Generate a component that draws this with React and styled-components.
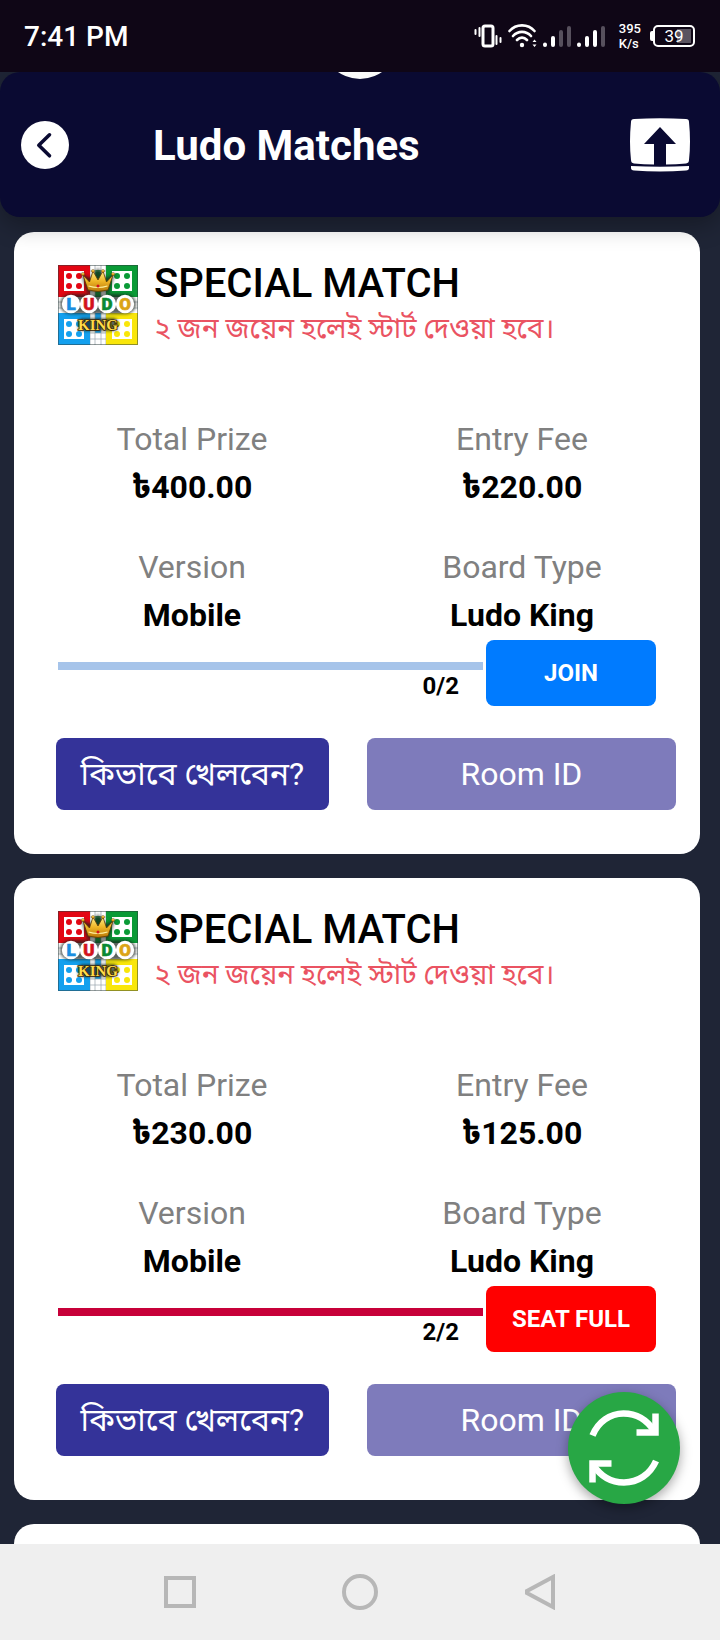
import React from "react";
import styled, { createGlobalStyle } from "styled-components";

const GlobalStyle = createGlobalStyle`
  * {
    box-sizing: border-box;
  }
  body {
    margin: 0;
    background: #1f2536;
    font-family: Roboto, "Noto Sans Bengali", "Noto Sans", sans-serif;
  }
  button {
    font-family: inherit;
    border: none;
    padding: 0;
    cursor: pointer;
  }
`;

const Screen = styled.div`
  height: 100vh;
  display: flex;
  flex-direction: column;
  background: #1f2536;
`;

const StatusBar = styled.div`
  flex: none;
  height: 72px;
  padding: 0 25px 0 24px;
  display: flex;
  align-items: center;
  justify-content: space-between;
  background: #0f0616;
  color: #fff;
`;

const Clock = styled.span`
  padding-top: 2px;
  font-size: 28px;
  font-weight: 500;
  line-height: 32px;
`;

const StatusIcons = styled.div`
  display: flex;
  align-items: center;
  gap: 6px;
`;

const Speed = styled.div`
  padding: 0 3px 0 8px;
  font-size: 13px;
  font-weight: 500;
  line-height: 15px;
`;

const Battery = styled.div`
  display: flex;
  align-items: center;
`;

const BatteryTip = styled.span`
  width: 3px;
  height: 10px;
  border-radius: 2px 0 0 2px;
  background: #fff;
`;

const BatteryBody = styled.span`
  width: 42px;
  height: 22px;
  border: 2px solid #fff;
  border-radius: 5px;
  padding: 2px;
  display: flex;
`;

const BatteryLevel = styled.span`
  flex: 1;
  font-size: 17px;
  line-height: 14px;
  text-align: center;
  background: linear-gradient(to right, transparent 60%, #5a5360 60%);
`;

const Content = styled.div`
  flex: 1;
  min-height: 0;
  position: relative;
  overflow: hidden;
`;

const Header = styled.header`
  position: relative;
  z-index: 1;
  height: 145px;
  padding: 0 30px 0 21px;
  display: flex;
  align-items: center;
  background: #0a0a32;
  border-radius: 20px;
  box-shadow: 0 8px 24px rgba(0, 0, 0, 0.3);
`;

const Spinner = styled.span`
  position: absolute;
  top: -69px;
  left: 50%;
  width: 76px;
  height: 76px;
  margin-left: -38px;
  border-radius: 50%;
  background: #fafafa;
`;

const IconButton = styled.button`
  display: flex;
  align-items: center;
  justify-content: center;
  background: none;
`;

const BackButton = styled(IconButton)`
  width: 48px;
  height: 48px;
  border-radius: 50%;
  background: #fff;
`;

const Title = styled.h1`
  flex: 1;
  margin: 0;
  padding: 2px 0 0 84px;
  color: #fff;
  font-size: 42px;
  font-weight: 700;
  line-height: 48px;
`;

const List = styled.main`
  padding: 15px 20px 0 14px;
  display: flex;
  flex-direction: column;
  gap: 24px;
`;

const Card = styled.section`
  min-height: 622px;
  border-radius: 20px;
  background: #fff;
`;

const CardTop = styled.div`
  padding: 33px 44px 0;
  display: flex;
  gap: 16px;
`;

const Name = styled.h2`
  margin: 0;
  color: #000;
  font-size: 40px;
  font-weight: 500;
  line-height: 38px;
`;

const Note = styled.p`
  margin: 0;
  color: #ea5362;
  font-size: 28px;
  line-height: 52px;
  white-space: nowrap;
`;

const Stats = styled.dl`
  margin: 0;
  padding: 60px 13px 1px;
  display: grid;
  grid-template-columns: 1fr 1fr;
  row-gap: 32px;
  text-align: center;
  font-size: 32px;
  line-height: 48px;
`;

const Label = styled.dt`
  color: #808080;
`;

const Value = styled.dd`
  margin: 0;
  color: #000;
  font-weight: 700;
`;

const SeatRow = styled.div`
  padding: 0 44px;
  display: flex;
  gap: 3px;
`;

const Seats = styled.div`
  flex: 1;
  padding-top: 22px;
`;

const Progress = styled.div`
  height: 8px;
  background: ${(props) => (props.$full ? "#c70039" : "#a6c4ea")};
`;

const Count = styled.div`
  padding: 2px 24px 0 0;
  color: #000;
  font-size: 24px;
  font-weight: 700;
  line-height: 28px;
  text-align: right;
`;

const JoinButton = styled.button`
  width: 170px;
  height: 66px;
  border-radius: 8px;
  background: ${(props) => (props.$full ? "#ff0000" : "#007bff")};
  color: #fff;
  font-size: 24px;
  font-weight: 700;
`;

const Actions = styled.div`
  padding: 32px 24px 44px 42px;
  display: grid;
  grid-template-columns: 15fr 17fr;
  gap: 38px;
`;

const ActionButton = styled.button`
  height: 72px;
  border-radius: 8px;
  background: ${(props) => (props.$muted ? "#7e7bbb" : "#343399")};
  color: #fff;
  font-size: 32px;
  line-height: 72px;
  white-space: nowrap;
`;

const RefreshButton = styled(IconButton)`
  position: absolute;
  z-index: 2;
  right: 40px;
  bottom: 40px;
  width: 112px;
  height: 112px;
  border-radius: 50%;
  background: #28a745;
  box-shadow: 0 4px 12px rgba(0, 0, 0, 0.35);
`;

const NavBar = styled.nav`
  flex: none;
  height: 96px;
  padding: 0 12.5%;
  display: flex;
  background: #efefef;
`;

const NavButton = styled(IconButton)`
  flex: 1;
`;

const VibrateIcon = () => (
  <svg width="28" height="24" viewBox="0 0 28 24" fill="none" stroke="#fff" strokeLinecap="round">
    <rect x="9" y="2" width="10" height="20" rx="2" strokeWidth="3" />
    <path d="M1.500 6v4M5.500 4v8M22.500 12v8M26.500 14v4" strokeWidth="2" />
  </svg>
);

const WifiIcon = () => (
  <svg width="29" height="24" viewBox="0 0 29 24" fill="none" stroke="#fff" strokeWidth="2.600" strokeLinecap="round">
    <path d="M1.500 7C8-.5 20-.5 26.500 7M5 12c5-5.500 13-5.500 18 0M9 16c3-3.200 7-3.200 10 0" />
    <circle cx="14" cy="21" r="2.200" fill="#fff" stroke="none" />
    <path d="M24.500 18l2-2.500 2 2.500zM24.500 20.500l2 2.500 2-2.500z" fill="#fff" stroke="none" />
  </svg>
);

const SignalIcon = ({ bars }) => (
  <svg width="28" height="24" viewBox="0 0 28 24" strokeWidth="4" strokeLinecap="round">
    {[20.5, 14, 8, 4].map((top, i) => (
      <path key={top} d={`M${2 + i * 8} ${top}V21`} stroke={i < bars ? "#fff" : "#57505d"} />
    ))}
  </svg>
);

const ChevronIcon = () => (
  <svg width="48" height="48" viewBox="0 0 48 48" fill="none" stroke="#0a0a32" strokeWidth="3.600">
    <path d="M28.500 13.800L17.800 24.300l10.700 10.500" strokeLinecap="round" strokeLinejoin="round" />
  </svg>
);

const UploadIcon = () => (
  <svg width="60" height="54" viewBox="0 0 60 54" fill="#fff">
    <path d="M4 1Q30-.5 56 1q3 0 3 3 2 20 0 38 0 3-3 3.500-10 1-20 1V26h10L30 9 14 26h10v20.500q-10 0-20-1-3-.5-3-3.500-2-18 0-38 0-3 3-3z" />
    <path d="M1 48q29 1.500 58 0v2q0 2-3 2.500-26 2-52 0-3-.5-3-2.500z" />
  </svg>
);

const RefreshIcon = () => (
  <svg width="112" height="112" viewBox="0 0 112 112" fill="none" stroke="#fff" strokeWidth="6.500">
    <path d="M24.500 43.500C30 30 42 21.500 55.500 21.500c13 0 24 7 31 18" />
    <path d="M87.500 21.500V40.500H68.500" />
    <path d="M88 69C82 82.500 70 90.500 56 90.500c-13 0-24-7-31-18" />
    <path d="M24.500 90.500V71.500H43.500" />
  </svg>
);

const corners = [
  { x: 0, y: 0, color: "#e30613" },
  { x: 48, y: 0, color: "#0a9a36" },
  { x: 0, y: 48, color: "#14a0ee" },
  { x: 48, y: 48, color: "#f9e60a" },
];

const letters = [
  { char: "L", color: "#1a8fe0" },
  { char: "U", color: "#d3121c" },
  { char: "D", color: "#0b8a32" },
  { char: "O", color: "#dba417" },
];

const LudoLogo = () => (
  <svg width="80" height="80" viewBox="0 0 80 80" role="img" aria-label="Ludo King">
    <defs>
      <linearGradient id="gold" x1="0" y1="0" x2="0" y2="1">
        <stop offset="0" stopColor="#fff08a" />
        <stop offset="0.500" stopColor="#eeb526" />
        <stop offset="1" stopColor="#b97708" />
      </linearGradient>
      <filter id="glow" x="-20%" y="-30%" width="140%" height="160%">
        <feGaussianBlur stdDeviation="1.500" />
      </filter>
    </defs>
    <rect width="80" height="80" fill="#fff" />
    <path d="M37 5h6v27h-6z" fill="#0a9a36" />
    <path d="M37 48h6v20h-6z" fill="#14a0ee" />
    <path d="M32 0v80M37 0v80M43 0v80M48 0v80M32 6h16M32 74h16M32 68h16M0 37h80M0 43h80" stroke="#9aa5ad" strokeWidth="0.700" />
    {corners.map(({ x, y, color }) => (
      <g key={color} fill={color}>
        <rect x={x} y={y} width="32" height="32" />
        <rect x={x + 6} y={y + 6} width="20" height="20" fill="#fff" />
        <circle cx={x + 11} cy={y + 11} r="3" />
        <circle cx={x + 21} cy={y + 11} r="3" />
        <circle cx={x + 11} cy={y + 21} r="3" />
        <circle cx={x + 21} cy={y + 21} r="3" />
      </g>
    ))}
    <rect x="0.500" y="0.500" width="79" height="79" fill="none" stroke="#2b3b3b" strokeOpacity="0.500" />
    <g filter="url(#glow)" fill="#15201a" opacity="0.700">
      <rect x="2" y="29" width="76" height="20" rx="10" />
      <rect x="20" y="53" width="40" height="13" rx="5" />
      <path d="M23 8l9 5 8-10 8 10 9-5-6 20H29z" />
    </g>
    <path d="M25 10l6.500 7L35 6l5 9 5-9 3.500 11L55 10l-5 15q-10 3-20 0z" fill="url(#gold)" stroke="#5d3b05" strokeWidth="0.800" />
    <path d="M30.500 21q9.500 3 19 0" fill="none" stroke="#fff1a0" strokeWidth="1.200" />
    <g fill="url(#gold)" stroke="#5d3b05" strokeWidth="0.400">
      <circle cx="25" cy="9" r="1.600" />
      <circle cx="35" cy="6" r="1.600" />
      <circle cx="45" cy="6" r="1.600" />
      <circle cx="55" cy="9" r="1.600" />
    </g>
    <circle cx="40" cy="21" r="1.500" fill="#d3121c" />
    <g fontFamily="Roboto, sans-serif" fontSize="17" fontWeight="900" textAnchor="middle">
      {letters.map(({ char, color }, i) => (
        <g key={char}>
          <circle cx={13 + i * 18} cy="39" r="9.200" fill="#fff" />
          <text x={13 + i * 18} y="45" fill={color} stroke={color} strokeWidth="0.600">
            {char}
          </text>
        </g>
      ))}
    </g>
    <text
      x="40"
      y="65"
      fill="#ffdc4a"
      stroke="#3d2803"
      strokeWidth="1.600"
      paintOrder="stroke"
      fontFamily="Liberation Serif, serif"
      fontSize="15"
      fontWeight="700"
      textAnchor="middle"
    >
      KING
    </text>
  </svg>
);

const matches = [
  { id: 1, prize: "৳400.00", fee: "৳220.00", joined: 0, seats: 2 },
  { id: 2, prize: "৳230.00", fee: "৳125.00", joined: 2, seats: 2 },
];

const Match = ({ match }) => {
  const full = match.joined === match.seats;
  return (
    <Card>
      <CardTop>
        <LudoLogo />
        <div>
          <Name>SPECIAL MATCH</Name>
          <Note>২ জন জয়েন হলেই স্টার্ট দেওয়া হবে।</Note>
        </div>
      </CardTop>
      <Stats>
        <div>
          <Label>Total Prize</Label>
          <Value>{match.prize}</Value>
        </div>
        <div>
          <Label>Entry Fee</Label>
          <Value>{match.fee}</Value>
        </div>
        <div>
          <Label>Version</Label>
          <Value>Mobile</Value>
        </div>
        <div>
          <Label>Board Type</Label>
          <Value>Ludo King</Value>
        </div>
      </Stats>
      <SeatRow>
        <Seats>
          <Progress $full={full} />
          <Count>
            {match.joined}/{match.seats}
          </Count>
        </Seats>
        <JoinButton $full={full}>{full ? "SEAT FULL" : "JOIN"}</JoinButton>
      </SeatRow>
      <Actions>
        <ActionButton>কিভাবে খেলবেন?</ActionButton>
        <ActionButton $muted>Room ID</ActionButton>
      </Actions>
    </Card>
  );
};

const App = () => {
  return (
    <Screen>
      <GlobalStyle />
      <StatusBar>
        <Clock>7:41 PM</Clock>
        <StatusIcons>
          <VibrateIcon />
          <WifiIcon />
          <SignalIcon bars={2} />
          <SignalIcon bars={3} />
          <Speed>
            395
            <br />
            K/s
          </Speed>
          <Battery>
            <BatteryTip />
            <BatteryBody>
              <BatteryLevel>39</BatteryLevel>
            </BatteryBody>
          </Battery>
        </StatusIcons>
      </StatusBar>
      <Content>
        <Header>
          <Spinner />
          <BackButton aria-label="Back">
            <ChevronIcon />
          </BackButton>
          <Title>Ludo Matches</Title>
          <IconButton aria-label="Upload">
            <UploadIcon />
          </IconButton>
        </Header>
        <List>
          {matches.map((match) => (
            <Match match={match} key={match.id} />
          ))}
          <Card />
        </List>
        <RefreshButton aria-label="Refresh">
          <RefreshIcon />
        </RefreshButton>
      </Content>
      <NavBar>
        <NavButton aria-label="Recent apps">
          <svg width="36" height="36" fill="none" stroke="#b7b7b7" strokeWidth="4">
            <rect x="4" y="4" width="28" height="28" />
          </svg>
        </NavButton>
        <NavButton aria-label="Home">
          <svg width="36" height="36" fill="none" stroke="#b7b7b7" strokeWidth="4">
            <circle cx="18" cy="18" r="16" />
          </svg>
        </NavButton>
        <NavButton aria-label="Go back">
          <svg width="36" height="36" fill="none" stroke="#b7b7b7" strokeWidth="4">
            <path d="M31 3v30L5 19v-2z" />
          </svg>
        </NavButton>
      </NavBar>
    </Screen>
  );
};

export default App;
